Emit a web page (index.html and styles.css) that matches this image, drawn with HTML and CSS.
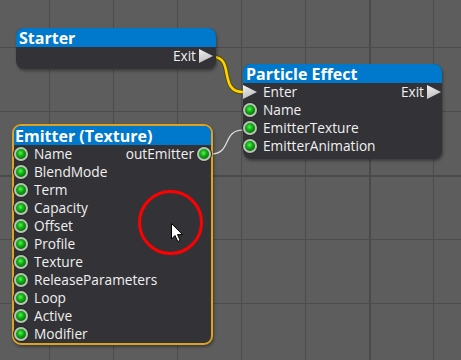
FILE: index.html
```html
<!DOCTYPE html>
<html lang="en">
<head>
    <meta charset="UTF-8">
    <meta name="viewport" content="width=device-width, initial-scale=1.0">
    <title>Particle Graph</title>
    <link rel="stylesheet" href="styles.css">
</head>
<body>
    <div class="canvas">
        <svg class="wires" width="461" height="360">
            <path class="wire-flow-edge" d="M213,57 C235,57 218,92 243,92"/>
            <path class="wire-flow" d="M213,57 C235,57 218,92 243,92"/>
            <path class="wire-data" d="M211,154 C232,154 222,130 243,130"/>
        </svg>

        <div class="node starter">
            <div class="node-title">Starter</div>
            <div class="node-body">
                <div class="row">
                    <span class="out">Exit<i class="flow"></i></span>
                </div>
            </div>
        </div>

        <div class="node particle">
            <div class="node-title">Particle Effect</div>
            <div class="node-body">
                <div class="row">
                    <span class="in"><i class="flow"></i>Enter</span>
                    <span class="out">Exit<i class="flow"></i></span>
                </div>
                <div class="row"><span class="in"><i class="port"></i>Name</span></div>
                <div class="row"><span class="in"><i class="port"></i>EmitterTexture</span></div>
                <div class="row"><span class="in"><i class="port"></i>EmitterAnimation</span></div>
            </div>
        </div>

        <div class="node emitter selected">
            <div class="node-title">Emitter (Texture)</div>
            <div class="node-body">
                <div class="row">
                    <span class="in"><i class="port"></i>Name</span>
                    <span class="out">outEmitter<i class="port"></i></span>
                </div>
                <div class="row"><span class="in"><i class="port"></i>BlendMode</span></div>
                <div class="row"><span class="in"><i class="port"></i>Term</span></div>
                <div class="row"><span class="in"><i class="port"></i>Capacity</span></div>
                <div class="row"><span class="in"><i class="port"></i>Offset</span></div>
                <div class="row"><span class="in"><i class="port"></i>Profile</span></div>
                <div class="row"><span class="in"><i class="port"></i>Texture</span></div>
                <div class="row"><span class="in"><i class="port"></i>ReleaseParameters</span></div>
                <div class="row"><span class="in"><i class="port"></i>Loop</span></div>
                <div class="row"><span class="in"><i class="port"></i>Active</span></div>
                <div class="row"><span class="in"><i class="port"></i>Modifier</span></div>
            </div>
        </div>

        <svg class="overlay" width="461" height="360">
            <circle cx="170.5" cy="222.5" r="31" fill="none" stroke="#ff0000" stroke-width="3"/>
            <path d="M171.5,223.5 L171.5,239 L175,235.5 L177.8,241.5 L180.2,240.4 L177.5,234.6 L182.5,234.6 Z" fill="#fff" stroke="#000" stroke-width="1" stroke-linejoin="round"/>
        </svg>
    </div>
</body>
</html>
```

FILE: styles.css
```css
body {
    margin: 0;
    font-family: "Open Sans", "Noto Sans", sans-serif;
    background-color: #5d5d5d;
}
.canvas {
    position: relative;
    width: 461px;
    height: 360px;
    overflow: hidden;
    background-color: #5d5d5d;
    background-image:
        linear-gradient(90deg, #4a4a4a 2px, transparent 2px),
        linear-gradient(#4a4a4a 2px, transparent 2px),
        linear-gradient(90deg, #4c4c4c 1px, transparent 1px),
        linear-gradient(#4c4c4c 1px, transparent 1px);
    background-size: 512px 512px, 512px 512px, 64px 64px, 64px 64px;
    background-position: 369px 0, 0 175px, 49px 0, 0 47px;
}
.wires,
.overlay {
    position: absolute;
    left: 0;
    top: 0;
}
.overlay {
    z-index: 5;
}
.wire-flow-edge {
    fill: none;
    stroke: #5a4a00;
    stroke-width: 4.5;
}
.wire-flow {
    fill: none;
    stroke: #ffd400;
    stroke-width: 2.6;
}
.wire-data {
    fill: none;
    stroke: #e4e4e4;
    stroke-width: 1.2;
}
.node {
    position: absolute;
    box-sizing: border-box;
    background-color: #333337;
    border-radius: 8px;
    box-shadow: 1px 2px 3px rgba(0, 0, 0, 0.35);
    color: #f0f0f0;
    z-index: 2;
}
.node-title {
    display: flex;
    align-items: center;
    height: 19px;
    padding-left: 3px;
    border-radius: 8px 8px 0 0;
    background-color: #0078cc;
    color: #fff;
    font-size: 16px;
    line-height: 1;
    font-weight: bold;
    white-space: nowrap;
}
.node-body {
    padding-bottom: 4px;
}
.row {
    display: flex;
    align-items: center;
    height: 18px;
    font-size: 13.7px;
    line-height: 1;
    white-space: nowrap;
}
.in,
.out {
    display: flex;
    align-items: center;
}
.in i {
    margin-right: 6px;
}
.out {
    margin-left: auto;
}
.out i {
    margin-left: 3px;
}
.port {
    display: block;
    box-sizing: border-box;
    width: 14px;
    height: 14px;
    border-radius: 50%;
    border: 2px solid #b9c2b9;
    background: radial-gradient(circle at 45% 40%, #5cf05c 0, #14b414 35%, #037803 70%, #024802 100%);
    box-shadow: 0 0 0 1px #2a2a2a;
}
.flow {
    display: block;
    width: 14px;
    height: 14px;
    clip-path: polygon(0 0, 100% 50%, 0 100%);
    background: linear-gradient(160deg, #f2f2f2, #b4b4b4);
}
.starter {
    left: 16px;
    top: 28px;
    width: 200px;
}
.starter .out {
    margin-right: 3px;
}
.particle {
    left: 243px;
    top: 64px;
    width: 199px;
}
.particle .out {
    margin-right: 1px;
}
.emitter {
    left: 12px;
    top: 124px;
    width: 201px;
}
.emitter .node-body {
    padding-bottom: 0;
}
.selected {
    border: 2px solid #dca224;
    border-radius: 9px;
}
.selected .node-title {
    padding-left: 1px;
    border-radius: 7px 7px 0 0;
}
```
